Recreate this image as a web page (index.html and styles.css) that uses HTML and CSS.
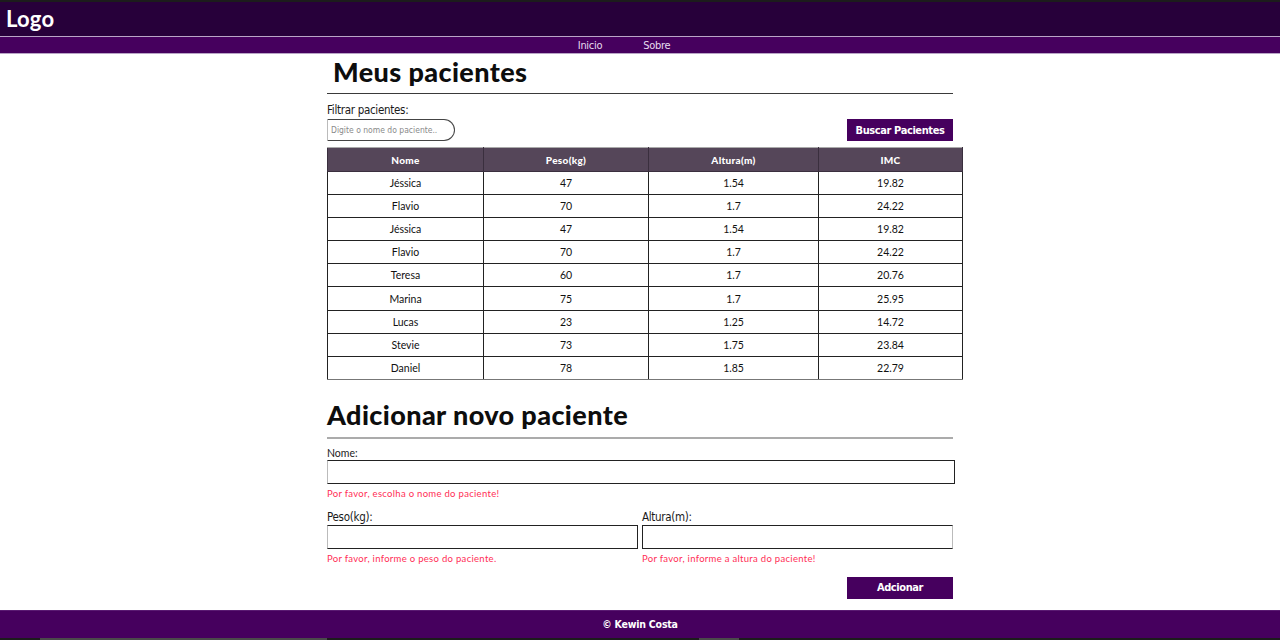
FILE: index.html
```html
<!DOCTYPE html>
<html lang="pt-BR">
<head>
<meta charset="utf-8">
<title>Meus pacientes</title>
<link rel="stylesheet" href="styles.css">
</head>
<body>
<header class="topbar">
  <div class="logo">Logo</div>
</header>
<nav class="menu">
  <a href="#" class="menu-link">Inicio</a>
  <a href="#" class="menu-link">Sobre</a>
</nav>
<main class="main">
  <h1 class="title title-first">Meus pacientes</h1>
  <hr class="rule rule-dark">
  <label class="cond-label filter-label">Filtrar pacientes:</label>
  <div class="filter-row">
    <input class="filter-input" type="text" placeholder="Digite o nome do paciente..">
    <button class="btn">Buscar Pacientes</button>
  </div>
  <table class="patients">
    <thead>
      <tr><th class="c1">Nome</th><th class="c2">Peso(kg)</th><th class="c3">Altura(m)</th><th class="c4">IMC</th></tr>
    </thead>
    <tbody>
      <tr><td>Jéssica</td><td>47</td><td>1.54</td><td>19.82</td></tr>
      <tr><td>Flavio</td><td>70</td><td>1.7</td><td>24.22</td></tr>
      <tr><td>Jéssica</td><td>47</td><td>1.54</td><td>19.82</td></tr>
      <tr><td>Flavio</td><td>70</td><td>1.7</td><td>24.22</td></tr>
      <tr><td>Teresa</td><td>60</td><td>1.7</td><td>20.76</td></tr>
      <tr><td>Marina</td><td>75</td><td>1.7</td><td>25.95</td></tr>
      <tr><td>Lucas</td><td>23</td><td>1.25</td><td>14.72</td></tr>
      <tr><td>Stevie</td><td>73</td><td>1.75</td><td>23.84</td></tr>
      <tr><td>Daniel</td><td>78</td><td>1.85</td><td>22.79</td></tr>
    </tbody>
  </table>

  <h2 class="title title-second">Adicionar novo paciente</h2>
  <hr class="rule rule-grey">
  <form class="form">
    <label class="geo-label">Nome:</label>
    <input class="field field-full" type="text">
    <p class="error">Por favor, escolha o nome do paciente!</p>
    <div class="two-cols">
      <div class="col col-left">
        <label class="cond-label">Peso(kg):</label>
        <input class="field" type="text">
        <p class="error">Por favor, informe o peso do paciente.</p>
      </div>
      <div class="col col-right">
        <label class="cond-label">Altura(m):</label>
        <input class="field" type="text">
        <p class="error">Por favor, informe a altura do paciente!</p>
      </div>
    </div>
    <div class="submit-row">
      <button type="button" class="btn btn-add">Adcionar</button>
    </div>
  </form>
</main>
<footer class="footer">© Kewin Costa</footer>
<div class="bottom-strip">
  <span class="strip-block strip-a"></span>
  <span class="strip-block strip-b"></span>
</div>
</body>
</html>
```

FILE: styles.css
```css
html, body {
  margin: 0;
  padding: 0;
  background: #ffffff;
}

body {
  font-family: "Lato", "Noto Sans", sans-serif;
  color: #111;
}

.topbar {
  border-top: 2px solid #1c1c1c;
  background: #27003a;
  height: 36px;
  box-sizing: border-box;
  padding: 5px 0 0 6px;
}

.logo {
  color: #ffffff;
  font-family: "Lato", sans-serif;
  font-weight: 700;
  font-size: 22px;
  line-height: 24px;
  letter-spacing: 0.2px;
}

.menu {
  background: #46005e;
  border-top: 1px solid #b9a5c6;
  border-bottom: 1px solid #b9a5c6;
  height: 16px;
  display: flex;
  justify-content: center;
  gap: 41px;
  padding-right: 32px;
}

.menu-link {
  color: #e6dcef;
  text-decoration: none;
  font-family: "DejaVu Sans Condensed", "Liberation Sans Narrow", sans-serif;
  font-stretch: condensed;
  font-size: 11px;
  line-height: 18px;
  letter-spacing: -0.3px;
}

.main {
  width: 636px;
  margin-left: calc(50% - 313px);
  padding-bottom: 11px;
}

.title {
  font-family: "Lato", sans-serif;
  font-weight: 900;
  font-size: 27px;
  line-height: 32px;
  margin: 0;
  color: #0d0d0d;
  letter-spacing: 0.4px;
}

.title-first {
  padding: 2px 0 0 6px;
  height: 33px;
}

.rule {
  border: 0;
  margin: 0;
  width: 626px;
}

.rule-dark {
  height: 1px;
  background: #3a3a3a;
  margin-top: 4px;
}

.rule-grey {
  height: 2px;
  background: #ababab;
  margin-top: 6px;
}

.cond-label {
  display: block;
  font-family: "DejaVu Sans Condensed", "Liberation Sans Narrow", sans-serif;
  font-stretch: condensed;
  font-size: 11.5px;
  line-height: 14px;
  color: #1a1a1a;
  letter-spacing: -0.3px;
}

.filter-label {
  margin-top: 9px;
}

.filter-row {
  display: flex;
  justify-content: space-between;
  align-items: flex-start;
  width: 626px;
  margin-top: 2px;
}

.filter-input {
  width: 128px;
  height: 22px;
  box-sizing: border-box;
  border: 1px solid #444;
  border-left-color: #bbb;
  border-radius: 0 11px 11px 0;
  padding: 0 3px;
  font-family: "DejaVu Sans Condensed", sans-serif;
  font-size: 8.5px;
  outline: none;
}

.filter-input::placeholder {
  color: #8a8a8a;
}

.btn {
  background: #46005e;
  color: #ffffff;
  border: 0;
  width: 106px;
  height: 22px;
  font-family: "DejaVu Sans Condensed", "Liberation Sans Narrow", sans-serif;
  font-stretch: condensed;
  font-weight: 700;
  font-size: 11px;
  letter-spacing: -0.4px;
  padding: 0;
  cursor: pointer;
}

.patients {
  width: 636px;
  margin-top: 6px;
  border-collapse: collapse;
  border: 1px solid #555;
  border-left-color: #aaa;
  font-family: "Lato", sans-serif;
  font-size: 10.5px;
}

.patients th {
  background: #554659;
  color: #ffffff;
  font-weight: 900;
  font-size: 10px;
  height: 23px;
  padding: 0;
  border: 1px solid #3a2f3e;
  border-top-color: #aaa;
  letter-spacing: 0.3px;
}

.c1 { width: 155px; }
.c2 { width: 164px; }
.c3 { width: 169px; }

.patients td {
  text-align: center;
  height: 22.1px;
  padding: 0;
  border: 1px solid #222;
  color: #111;
}

.patients tbody tr:last-child td {
  border-bottom-color: #777;
}

.title-second {
  margin-top: 19px;
  height: 32px;
}

.form {
  width: 628px;
}

.geo-label {
  display: block;
  font-family: "Lato", sans-serif;
  font-size: 10.5px;
  line-height: 12px;
  margin-top: 8px;
  color: #222;
}

.field {
  display: block;
  width: 100%;
  height: 24px;
  box-sizing: border-box;
  border: 1px solid #222;
  border-left-color: #bbb;
  margin: 1px 0 0 0;
  outline: none;
}

.field-full {
  width: 628px;
}

.error {
  margin: 4px 0 0 0;
  font-family: "Lato", sans-serif;
  font-size: 9.5px;
  line-height: 12px;
  color: #ff2d55;
  letter-spacing: 0.3px;
}

.two-cols {
  display: flex;
  gap: 4px;
  margin-top: 10px;
  width: 626px;
}

.col {
  flex: 1;
}

.col .cond-label {
  margin-bottom: 1px;
}

.col-right .field {
  border-left-color: #222;
  border-right-color: #bbb;
}

.submit-row {
  display: flex;
  justify-content: flex-end;
  width: 626px;
  margin-top: 12px;
}

.btn-add {
  height: 22px;
}

.footer {
  background: #46005e;
  color: #ffffff;
  text-align: center;
  height: 28px;
  line-height: 27px;
  font-family: "DejaVu Sans Condensed", sans-serif;
  font-stretch: condensed;
  font-weight: 700;
  font-size: 10.5px;
  letter-spacing: -0.2px;
  border-top: 1px solid #5a1a72;
  box-sizing: border-box;
}

.bottom-strip {
  height: 2px;
  background: #1c1c1c;
  display: flex;
}

.strip-block {
  display: block;
  height: 2px;
  background: #4a4a4a;
}

.strip-a {
  width: 287px;
  margin-left: 40px;
}

.strip-b {
  width: 40px;
  margin-left: 372px;
}
```
